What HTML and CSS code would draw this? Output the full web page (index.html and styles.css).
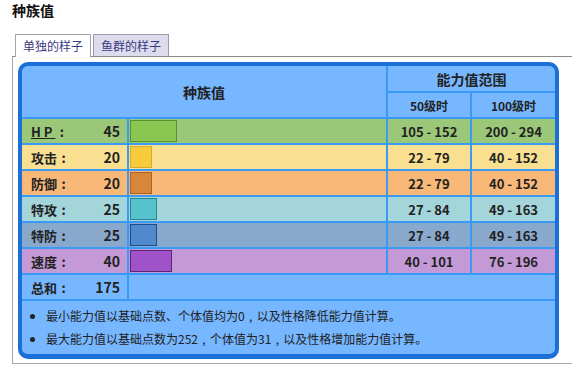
FILE: index.html
```html
<!DOCTYPE html>
<html lang="zh">
<head>
<meta charset="utf-8">
<link rel="stylesheet" href="styles.css">
</head>
<body>
<div class="title">种族值</div>
<div class="tabs">
  <div class="tab active">单独的样子</div>
  <div class="tab">鱼群的样子</div>
</div>
<div class="panel">
  <div class="statbox">
    <table class="stats">
      <colgroup><col class="c1"><col class="c2"><col class="c3"><col class="c4"></colgroup>
      <tr class="h1"><th colspan="2" rowspan="2" class="main">种族值</th><th colspan="2" class="range-h">能力值范围</th></tr>
      <tr class="h2"><th class="sub">50级时</th><th class="sub">100级时</th></tr>
      <tr class="row hp"><td><div class="lab"><span><u class="abbr">H P&nbsp;</u><span class="p">:</span></span><span class="val">45</span></div></td><td class="barcell"><div class="bar" style="width:45px"></div></td><td class="rng">105 - 152</td><td class="rng">200 - 294</td></tr>
      <tr class="row atk"><td><div class="lab"><span>攻击<span class="p">:</span></span><span class="val">20</span></div></td><td class="barcell"><div class="bar" style="width:20px"></div></td><td class="rng">22 - 79</td><td class="rng">40 - 152</td></tr>
      <tr class="row def"><td><div class="lab"><span>防御<span class="p">:</span></span><span class="val">20</span></div></td><td class="barcell"><div class="bar" style="width:20px"></div></td><td class="rng">22 - 79</td><td class="rng">40 - 152</td></tr>
      <tr class="row spa"><td><div class="lab"><span>特攻<span class="p">:</span></span><span class="val">25</span></div></td><td class="barcell"><div class="bar" style="width:25px"></div></td><td class="rng">27 - 84</td><td class="rng">49 - 163</td></tr>
      <tr class="row spd"><td><div class="lab"><span>特防<span class="p">:</span></span><span class="val">25</span></div></td><td class="barcell"><div class="bar" style="width:25px"></div></td><td class="rng">27 - 84</td><td class="rng">49 - 163</td></tr>
      <tr class="row spe"><td><div class="lab"><span>速度<span class="p">:</span></span><span class="val">40</span></div></td><td class="barcell"><div class="bar" style="width:40px"></div></td><td class="rng">40 - 101</td><td class="rng">76 - 196</td></tr>
      <tr class="row total"><td><div class="lab"><span>总和<span class="p">:</span></span><span class="val">175</span></div></td><td colspan="3"></td></tr>
      <tr class="notes"><td colspan="4">
        <ul>
          <li>最小能力值以基础点数、个体值均为0<span class="pc">,</span>以及性格降低能力值计算。</li>
          <li>最大能力值以基础点数为252<span class="pc">,</span>个体值为31<span class="pc">,</span>以及性格增加能力值计算。</li>
        </ul>
      </td></tr>
    </table>
  </div>
</div>
</body>
</html>
```
FILE: styles.css
```css
html, body {
  margin: 0;
  padding: 0;
  background: #fff;
  overflow: hidden;
}
body {
  font-family: "Noto Sans CJK SC", "Noto Sans", sans-serif;
  color: #222;
}
.p {
  display: inline-block;
  width: 1em;
  text-align: center;
}
.pc {
  display: inline-block;
  width: 1em;
  text-align: center;
}
.title {
  margin: 1px 0 15px 12px;
  height: 18px;
  line-height: 18px;
  font-size: 14px;
  font-weight: bold;
  color: #111;
}
.tabs {
  display: flex;
  align-items: flex-start;
  gap: 2px;
  margin-left: 15px;
  height: 22px;
}
.tab {
  box-sizing: border-box;
  height: 22px;
  padding: 0 7px;
  border: 1px solid #9a9aa6;
  border-bottom: none;
  background: #dcdcec;
  color: #3a3a82;
  font-size: 12px;
  line-height: 21px;
  white-space: nowrap;
}
.tab.active {
  position: relative;
  z-index: 1;
  height: 23px;
  background: #fff;
  border-color: #a4a4ac;
}
.panel {
  margin-left: 12px;
  border: 1px solid #a8a8a8;
  border-top-color: #8a8a90;
  border-right: none;
  padding: 5px 0 4px 5px;
}
.statbox {
  box-sizing: border-box;
  width: 541px;
  border: 4px solid #1b6fd6;
  border-bottom-width: 5px;
  border-radius: 10px;
  background: #3a9af8;
  overflow: hidden;
}
.stats {
  table-layout: fixed;
  border-collapse: separate;
  border-spacing: 2px;
  margin: -2px;
  width: 537px;
  font-size: 13px;
  font-weight: bold;
}
.c1 { width: 105px; }
.c2 { width: 257px; }
.c3 { width: 82px; }
.c4 { width: 83px; }
.stats th, .stats td {
  padding: 0;
  background: #76b7ff;
  text-align: center;
}
.h1 { height: 25px; }
.h2 { height: 24px; }
.main { font-size: 14px; }
.range-h { font-size: 14px; }
.sub { font-size: 12px; }
.row { height: 24px; }
.lab {
  display: flex;
  justify-content: space-between;
  align-items: center;
  padding: 0 7px 0 9px;
  font-size: 13px;
}
.val { font-size: 14px; }
.abbr { text-decoration: underline; }
.barcell { text-align: left !important; padding-left: 1px !important; }
.bar {
  box-sizing: content-box;
  height: 20px;
  border: 1px solid;
}
.hp td { background: #9bc878; }
.hp .bar { background: #8bc652; border-color: #5b8f2e; }
.atk td { background: #f8e090; }
.atk .bar { background: #f8cb3a; border-color: #d9ab2d; }
.def td { background: #f8b878; }
.def .bar { background: #d8873a; border-color: #a8642a; }
.spa td { background: #a3d5da; }
.spa .bar { background: #56c2cc; border-color: #2a8590; }
.spd td { background: #88a8cc; }
.spd .bar { background: #5089cc; border-color: #1d4d8a; }
.spe td { background: #c49ad6; }
.spe .bar { background: #a052c8; border-color: #5d2470; }
.rng { font-size: 13px; }
.notes td {
  height: 53px;
  text-align: left;
  font-weight: normal;
  font-size: 12px;
  padding: 0;
}
.notes ul {
  margin: 0;
  padding: 0 0 0 24px;
}
.notes li {
  line-height: 20px;
}
.notes li + li {
  margin-top: 3px;
}
```
